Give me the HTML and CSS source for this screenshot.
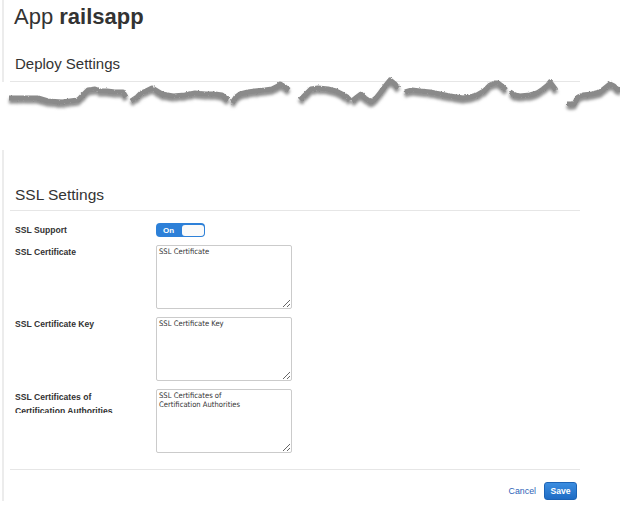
FILE: index.html
```html
<!DOCTYPE html>
<html lang="en">
<head>
    <meta charset="UTF-8">
    <meta name="viewport" content="width=device-width, initial-scale=1.0">
    <title>App railsapp</title>
    <link rel="stylesheet" href="styles.css">
</head>
<body>
    <div class="panel panel-top">
        <h1 class="app-title">App <strong>railsapp</strong></h1>
        <h2 class="section-title">Deploy Settings</h2>
    </div>

    <svg class="tear" viewBox="0 75 620 75" width="620" height="75" aria-hidden="true">
        <defs>
            <filter id="rough" x="-5%" y="-60%" width="110%" height="240%">
                <feTurbulence type="fractalNoise" baseFrequency="0.7" numOctaves="2" seed="4" result="noise"/>
                <feDisplacementMap in="SourceGraphic" in2="noise" scale="2.5" xChannelSelector="R" yChannelSelector="G" result="torn"/>
                <feGaussianBlur in="torn" stdDeviation="1.5" result="blur"/>
                <feOffset in="blur" dy="2.5" result="shadow"/>
                <feMerge>
                    <feMergeNode in="shadow"/>
                    <feMergeNode in="torn"/>
                </feMerge>
            </filter>
        </defs>
        <g class="tear-strips" filter="url(#rough)">
            <polyline points="9,98 25,98 38,98 48,101 62,102 78,100 84,94 88,90 95,89 100,91 107,91 115,92 123,92 126,97"/>
            <polyline points="131,101 137,97 141,93 146,91 152,88 157,91 162,94 173,96 185,95 195,93 205,94 215,94 222,95 228,100"/>
            <polyline points="232,103 236,97 240,94 248,92 255,91 265,90 272,89 278,86 280,84 285,87 289,90"/>
            <polyline points="300,100 305,95 311,89 318,88 328,89 336,91 342,94 347,97 350,100"/>
            <polyline points="352,101 357,97 361,94 365,98 371,102 376,98 380,93 386,85 390,80 395,84 398,88"/>
            <polyline points="405,92 412,90 420,91 430,92 440,94 450,96 463,98 470,97 477,95 484,91 490,85 495,83 498,83 502,86 506,90"/>
            <polyline points="510,92 515,95 520,96 530,95 537,93 543,89 548,85 550,82 553,86 556,90"/>
            <polyline points="567,104 574,104 578,97 583,95 592,94 600,92 605,88 610,84 614,86 617,89 621,90"/>
        </g>
    </svg>

    <div class="panel panel-bottom">
        <h2 class="section-title section-title-ssl">SSL Settings</h2>

        <div class="form">
            <div class="form-row form-row-toggle">
                <label class="form-label">SSL Support</label>
                <span class="toggle">
                    <span class="toggle-text">On</span>
                    <span class="toggle-knob"></span>
                </span>
            </div>
            <div class="form-row">
                <label class="form-label" for="sslCert">SSL Certificate</label>
                <textarea id="sslCert" class="form-text">SSL Certificate</textarea>
            </div>
            <div class="form-row">
                <label class="form-label" for="sslKey">SSL Certificate Key</label>
                <textarea id="sslKey" class="form-text">SSL Certificate Key</textarea>
            </div>
            <div class="form-row">
                <label class="form-label form-label-clipped" for="sslChain">SSL Certificates of<br>Certification Authorities</label>
                <textarea id="sslChain" class="form-text">SSL Certificates of
Certification Authorities</textarea>
            </div>
        </div>

        <div class="actions">
            <a class="cancel-link" href="#">Cancel</a>
            <button class="save-button">Save</button>
        </div>
    </div>
</body>
</html>
```

FILE: styles.css
```css
html, body {
    margin: 0;
    padding: 0;
    background: #fff;
}
body {
    font-family: "Liberation Sans", Arial, sans-serif;
    color: #333;
    width: 620px;
    overflow: hidden;
}
.panel {
    margin-left: 2px;
    border-left: 2px solid #ececec;
    padding-left: 6px;
    width: 570px;
}
.panel-top {
    padding-top: 4px;
}
.app-title {
    margin: 0;
    padding-left: 4px;
    font-size: 22px;
    line-height: 26px;
    font-weight: normal;
    color: #333;
}
.app-title strong {
    font-weight: bold;
}
.section-title {
    margin: 25px 0 0;
    padding: 0 0 8px 5px;
    font-size: 15px;
    line-height: 18px;
    font-weight: normal;
    color: #333;
    border-bottom: 1px solid #e6e6e6;
}
.tear {
    display: block;
    margin-top: -7px;
}
.tear-strips polyline {
    fill: none;
    stroke: #8a8a8a;
    stroke-width: 5;
    stroke-linejoin: round;
}
.panel-bottom {
    padding-top: 36px;
    padding-bottom: 1px;
}
.section-title-ssl {
    margin-top: 0;
    padding-bottom: 6px;
    font-size: 15.5px;
}
.form {
    padding-top: 12px;
}
.form-row {
    display: flex;
    align-items: flex-start;
    margin-bottom: 8px;
}
.form-row-toggle {
    align-items: center;
}
.form-label {
    width: 141px;
    padding-left: 5px;
    font-size: 8.6px;
    line-height: 13px;
    font-weight: bold;
    color: #333;
}
.form-row:not(.form-row-toggle) .form-label {
    padding-top: 1px;
}
.form-label-clipped {
    height: 23px;
    line-height: 14px;
    overflow: hidden;
}
.toggle {
    display: flex;
    align-items: center;
    justify-content: space-between;
    width: 49px;
    height: 14px;
    box-sizing: border-box;
    padding: 0 1px 0 7px;
    background: #2d80d8;
    border-radius: 4px;
}
.toggle-text {
    color: #fff;
    font-size: 8px;
    font-weight: bold;
}
.toggle-knob {
    width: 22px;
    height: 11px;
    background: #fafafa;
    border-radius: 3px;
}
.form-text {
    display: block;
    width: 136px;
    height: 64px;
    box-sizing: border-box;
    margin: 0;
    padding: 1px 2px;
    border: 1px solid #cbcbcb;
    border-radius: 2px;
    font-family: "DejaVu Sans Condensed", "DejaVu Sans", sans-serif;
    font-size: 7.6px;
    line-height: 9px;
    color: #333;
}
.actions {
    display: flex;
    justify-content: flex-end;
    align-items: center;
    gap: 8px;
    margin-top: 16px;
    padding: 12px 3px 0 0;
    border-top: 1px solid #e6e6e6;
}
.cancel-link {
    color: #2e63b8;
    font-size: 8.8px;
    text-decoration: none;
}
.save-button {
    height: 18px;
    width: 33px;
    padding: 0;
    background: linear-gradient(#3b8de0, #1f6cc4);
    border: 1px solid #1c63b5;
    border-radius: 3px;
    color: #fff;
    font-family: "Liberation Sans", Arial, sans-serif;
    font-size: 8.6px;
    font-weight: bold;
}
```
